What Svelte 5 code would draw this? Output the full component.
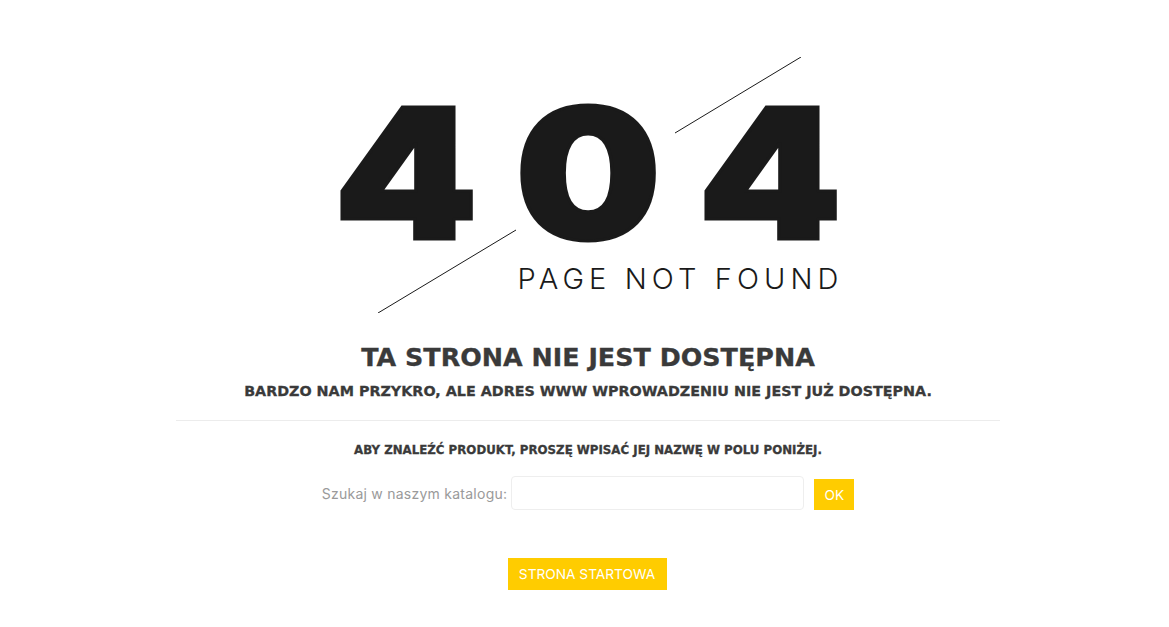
<script>
  let query = $state("");
</script>

<div class="page">
  <div class="hero">
    <div class="digits">
      <span>4</span>
      <span>0</span>
      <span>4</span>
    </div>
    <p class="slogan">PAGE NOT FOUND</p>
    <svg class="lines" width="503" height="256" viewBox="0 0 503 256" aria-hidden="true">
      <line x1="338" y1="76" x2="464" y2="0" />
      <line x1="41" y1="256" x2="179" y2="173" />
    </svg>
  </div>

  <h1>TA STRONA NIE JEST DOSTĘPNA</h1>
  <h2>BARDZO NAM PRZYKRO, ALE ADRES WWW WPROWADZENIU NIE JEST JUŻ DOSTĘPNA.</h2>
  <hr />
  <h3>ABY ZNALEŹĆ PRODUKT, PROSZĘ WPISAĆ JEJ NAZWĘ W POLU PONIŻEJ.</h3>

  <form class="search" onsubmit={(e) => e.preventDefault()}>
    <label for="q">Szukaj w naszym katalogu:</label>
    <input id="q" type="text" bind:value={query} />
    <button type="submit">OK</button>
  </form>

  <a class="home" href="#top">STRONA STARTOWA</a>
</div>

<style>
  :global(body) {
    background: #fff;
    font-family: "Inter", "Liberation Sans", sans-serif;
  }

  .page {
    display: flex;
    flex-direction: column;
    align-items: center;
    padding: 57px 0 37px 7px;
    height: 627px;
    box-sizing: border-box;
    overflow: hidden;
  }

  .hero {
    position: relative;
    width: 503px;
    height: 256px;
    display: flex;
    flex-direction: column;
  }

  .digits {
    display: flex;
    justify-content: space-between;
    margin-top: 29px;
    height: 175px;
    font-family: "Inter", sans-serif;
    font-weight: 900;
    font-size: 182px;
    line-height: 175px;
    color: #1a1a1a;
    -webkit-text-stroke: 3px #1a1a1a;
  }

  .digits span {
    width: 138px;
    text-align: center;
    transform: scaleX(1.13);
  }

  .digits span:last-child {
    margin-right: 1px;
  }

  .slogan {
    margin: 0 -4px 0 0;
    text-align: right;
    font-family: "Inter", sans-serif;
    font-weight: 300;
    font-size: 29px;
    line-height: 36px;
    letter-spacing: 5.1px;
    color: #1a1a1a;
  }

  .lines {
    position: absolute;
    left: 0;
    top: 0;
  }

  .lines line {
    stroke: #1a1a1a;
    stroke-width: 1;
  }

  h1,
  h2,
  h3 {
    font-family: "DejaVu Sans", sans-serif;
    font-weight: 700;
    color: #3a3a3a;
    -webkit-text-stroke: 0.3px #3a3a3a;
  }

  h1 {
    margin: 34px 0 0;
    font-size: 25.4px;
    line-height: 30px;
  }

  h2 {
    margin: 9px 0 0;
    font-size: 14.33px;
    line-height: 20px;
  }

  hr {
    width: 824px;
    margin: 19px 0 0;
    border: 0;
    border-top: 1px solid #ececec;
  }

  h3 {
    margin: 21px 0 0;
    font-size: 11.8px;
    line-height: 16px;
  }

  .search {
    display: flex;
    align-items: center;
    margin-top: 18px;
  }

  label {
    font-size: 14px;
    letter-spacing: 0.25px;
    color: #9a9a9a;
    margin-right: 4px;
  }

  input {
    width: 293px;
    height: 34px;
    box-sizing: border-box;
    border: 1px solid #eee;
    border-radius: 4px;
    margin-right: 10px;
  }

  button,
  .home {
    background: #ffcc00;
    color: #fff;
    border: 0;
    font-family: inherit;
    font-size: 13.7px;
    text-decoration: none;
    box-sizing: border-box;
  }

  button {
    width: 40px;
    height: 31px;
    padding: 0;
    margin-top: 3px;
  }

  .home {
    margin: 48px 2px 0 0;
    width: 159px;
    height: 32px;
    line-height: 32px;
    text-align: center;
  }
</style>
